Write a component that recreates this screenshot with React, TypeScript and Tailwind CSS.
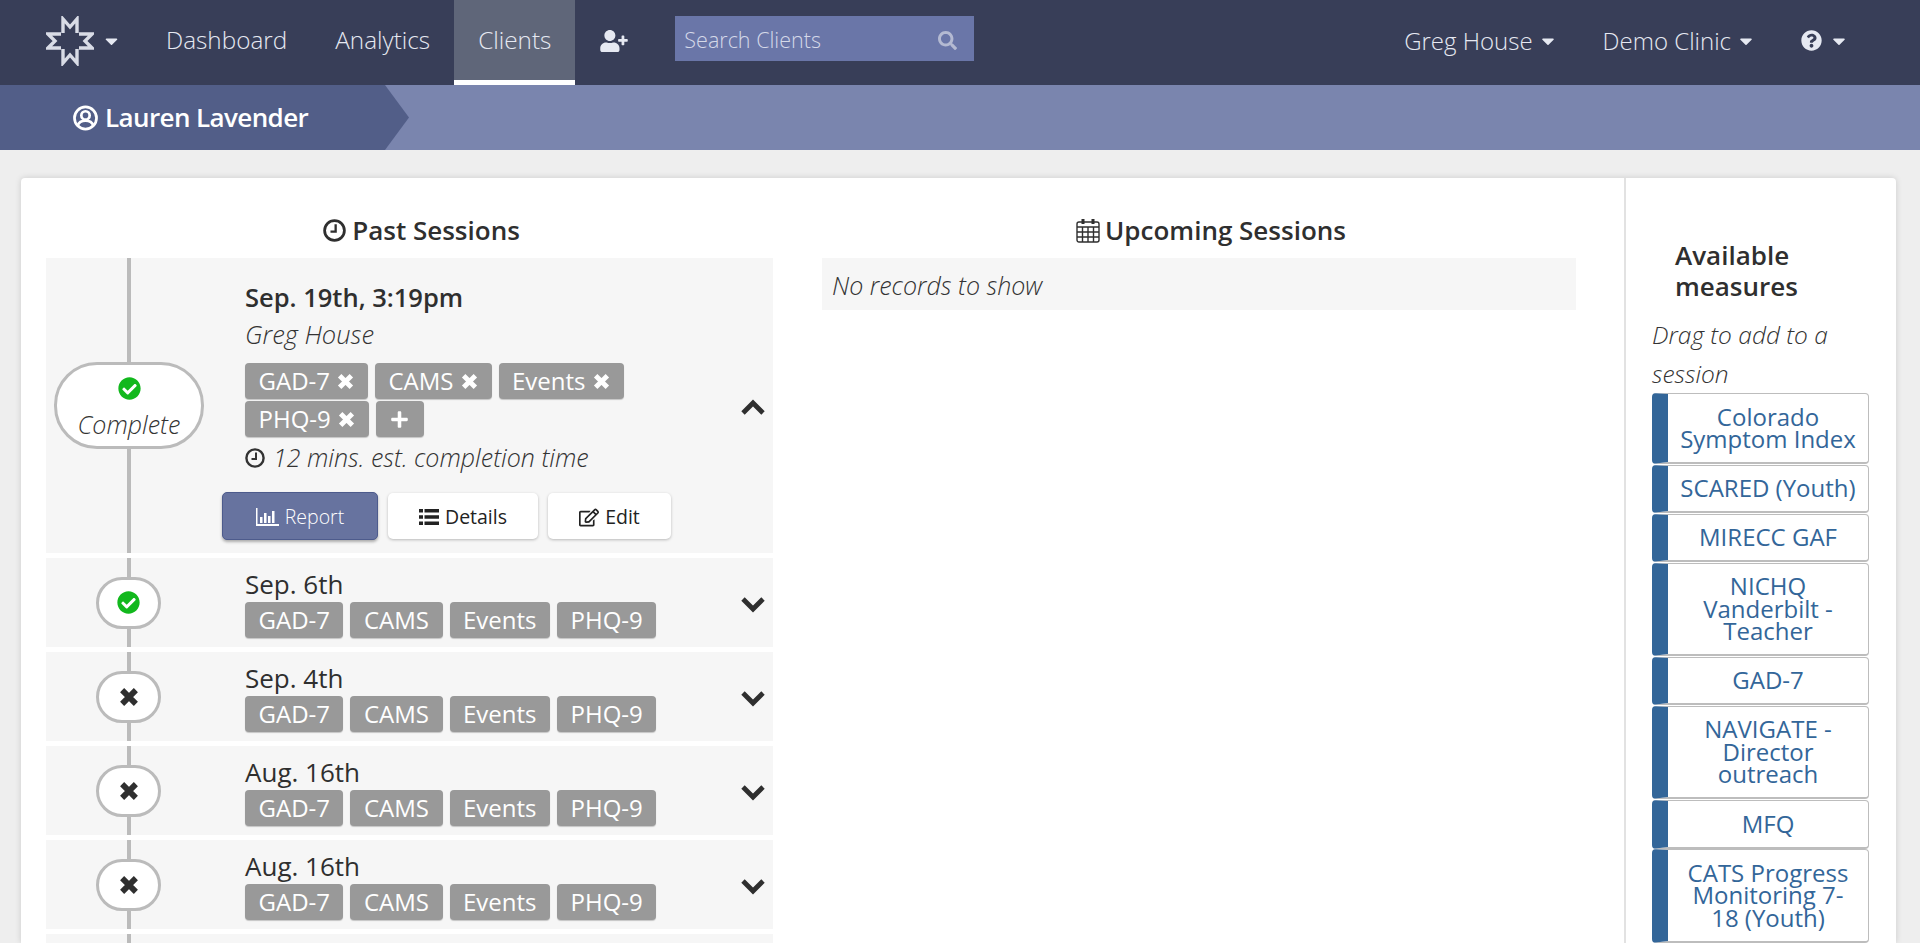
import { FaCaretDown, FaCheckCircle, FaPlus, FaQuestionCircle, FaRegEdit, FaSearch, FaUserPlus } from "react-icons/fa";

const measures = ["GAD-7", "CAMS", "Events", "PHQ-9"];

const sidebarItems = [
  "Colorado Symptom Index",
  "SCARED (Youth)",
  "MIRECC GAF",
  "NICHQ Vanderbilt - Teacher",
  "GAD-7",
  "NAVIGATE - Director outreach",
  "MFQ",
  "CATS Progress Monitoring 7-18 (Youth)",
];

const pastRows = [
  { date: "Sep. 6th", done: true },
  { date: "Sep. 4th", done: false },
  { date: "Aug. 16th", done: false },
  { date: "Aug. 16th", done: false },
];

function Logo() {
  return (
    <svg width="48" height="50" viewBox="0 0 48 50" fill="none" stroke="#d9dce6" strokeWidth="3.400" strokeLinejoin="miter">
      <path d="M17 17V3l7 8 7-8v14" />
      <path d="M17 33v14l7-8 7 8V33" />
      <path d="M15 18H2l7 7-7 7h13" />
      <path d="M33 18h13l-7 7 7 7H33" />
    </svg>
  );
}

function UserRing() {
  return (
    <svg width="25" height="26" viewBox="0 0 24 25" fill="none" stroke="currentColor" strokeWidth="2.600">
      <circle cx="12" cy="12.500" r="10.600" />
      <circle cx="12" cy="10" r="4" />
      <path d="M4.500 20c1-3.500 3.500-5 7.500-5s6.500 1.500 7.500 5" />
    </svg>
  );
}

function ClockIcon({ size }: { size: number }) {
  return (
    <svg width={size} height={size} viewBox="0 0 20 20" fill="none" stroke="currentColor" strokeWidth="2.400">
      <circle cx="10" cy="10" r="8.600" />
      <path d="M11 4.500V11H6.500" strokeWidth="2" />
    </svg>
  );
}

function CalendarIcon() {
  return (
    <svg width="24" height="25" viewBox="0 0 24 25" fill="none" stroke="#2f2f2f" strokeWidth="1.400">
      <rect x="1" y="4" width="22" height="20" rx="2" />
      <path d="M1 9h22M1 14h22M1 19h22M6.500 9v15M12 9v15M17.500 9v15" />
      <path d="M7 1v5M17 1v5" strokeWidth="3" />
    </svg>
  );
}

function ReportIcon() {
  return (
    <svg width="23" height="18" viewBox="0 0 23 18" fill="currentColor">
      <path d="M0 0h1.500v16H23v2H0z" />
      <path d="M4 9h2.500v6H4zM8 5h2.500v10H8zM12 8h2.500v7H12zM16 3h2.500v12H16z" />
    </svg>
  );
}

function ListIcon() {
  return (
    <svg width="20" height="18" viewBox="0 0 20 18" fill="currentColor">
      <path d="M0 1h4v3.500H0zM5.500 1H20v3.500H5.500zM0 7.200h4v3.500H0zM5.500 7.200H20v3.500H5.500zM0 13.500h4V17H0zM5.500 13.500H20V17H5.500z" />
    </svg>
  );
}

function Cross({ size }: { size: number }) {
  return (
    <svg width={size} height={size} viewBox="0 0 16 16" fill="none" stroke="currentColor" strokeWidth="4.600">
      <path d="M2.500 2.500l11 11M13.500 2.500l-11 11" />
    </svg>
  );
}

function Chevron({ up }: { up?: boolean }) {
  return (
    <svg width="24" height="16" viewBox="0 0 24 16" fill="none" stroke="#2f2f2f" strokeWidth="4.800">
      <path d={up ? "M2 14L12 4l10 10" : "M2 2l10 10L22 2"} />
    </svg>
  );
}

function Tag({ children }: { children: React.ReactNode }) {
  return (
    <span className="flex h-[36px] items-center gap-[6px] rounded-[4px] bg-[#999999] px-[13.500px] text-[24px] text-white shadow-[0_1px_1px_rgba(0,0,0,0.2)]">
      {children}
    </span>
  );
}

function NavLink({ label, active }: { label: string; active?: boolean }) {
  return (
    <a className={`flex h-[85px] items-center px-6 text-[24.300px] font-light ${active ? "border-b-[5px] border-white bg-[#5f6679]" : "pb-[4px]"}`}>
      {label}
    </a>
  );
}

function NavDropdown({ label }: { label: string }) {
  return (
    <span className="flex items-center gap-[8px] text-[24px] font-light">
      {label}
      <FaCaretDown className="h-[20px] w-[14px]" />
    </span>
  );
}

function Timeline({ children }: { children: React.ReactNode }) {
  return (
    <div className="flex w-[165px] shrink-0 flex-col items-center">
      <div className="w-[4px] flex-1 bg-[#bbbbbb]" />
      {children}
      <div className="w-[4px] flex-1 bg-[#bbbbbb]" />
    </div>
  );
}

function SessionRow({ date, done }: { date: string; done: boolean }) {
  return (
    <div className="flex h-[89px] bg-[#f6f6f6]">
      <Timeline>
        <div className="flex h-[52px] w-[65px] items-center justify-center rounded-[26px] border-[3px] border-[#bbbbbb] bg-white text-[#2f2f2f]">
          {done ? <FaCheckCircle className="h-[23px] w-[23px] text-[#12b81d]" /> : <Cross size={20} />}
        </div>
      </Timeline>
      <div className="flex-1 pl-[34px] pt-[11px]">
        <div className="h-[33px] text-[26px] leading-[30px] text-[#2f2f2f]">{date}</div>
        <div className="flex gap-[7px]">
          {measures.map((m) => (
            <Tag key={m}>{m}</Tag>
          ))}
        </div>
      </div>
      <div className="flex w-[32px] items-center pt-[5px]">
        <Chevron />
      </div>
    </div>
  );
}

export default function App() {
  return (
    <div className="flex h-screen flex-col overflow-hidden bg-[#eeeeee] font-['Open_Sans',sans-serif]">
      {/* top nav */}
      <nav className="flex h-[85px] shrink-0 items-center bg-[#383e58] text-[#e6e9f2]">
        <div className="mb-[3px] ml-[46px] flex w-[96px] items-center gap-[11px]">
          <Logo />
          <FaCaretDown className="h-[20px] w-[13px]" />
        </div>
        <NavLink label="Dashboard" />
        <NavLink label="Analytics" />
        <NavLink label="Clients" active />
        <div className="mb-[4px] flex w-[76px] justify-center">
          <FaUserPlus className="ml-[2px] h-[22px] w-[28px]" />
        </div>
        <div className="mb-[8px] ml-6 flex h-[45px] w-[299px] items-center justify-between bg-[#6a76a8] pl-[9px] pr-[17px] pt-[3px] text-[21.500px] font-light text-[#d5d9e8]">
          Search Clients
          <FaSearch className="h-[19px] w-[19px] text-[#b4bad2]" />
        </div>
        <div className="mb-[4px] ml-auto mr-[74px] flex items-center gap-[48px]">
          <NavDropdown label="Greg House" />
          <NavDropdown label="Demo Clinic" />
          <span className="flex items-center gap-[10px]">
            <FaQuestionCircle className="h-[21px] w-[21px]" />
            <FaCaretDown className="h-[20px] w-[14px]" />
          </span>
        </div>
      </nav>

      {/* client bar */}
      <div className="h-[65px] shrink-0 bg-[#7a85ae]">
        <div className="flex h-full w-[409px] items-center gap-[7px] bg-[#525e88] pl-[73px] text-[26px] font-semibold tracking-[-0.6px] text-white [clip-path:polygon(0_0,385px_0,409px_50%,385px_100%,0_100%)]">
          <UserRing />
          Lauren Lavender
        </div>
      </div>

      {/* main card */}
      <div className="ml-[21px] mr-[24px] mt-[28px] flex min-h-0 flex-1 rounded-t-[4px] bg-white shadow-[0_0_6px_rgba(0,0,0,0.15)]">
        <div className="flex flex-1 gap-[49px] pl-[25px] pr-[48px]">
          {/* past sessions */}
          <section className="w-[727px]">
            <h2 className="flex h-[80px] items-center justify-center gap-[6px] pl-[24px] pt-[24px] text-[26px] font-semibold text-[#2f2f2f]">
              <ClockIcon size={23} />
              Past Sessions
            </h2>
            <div className="flex flex-col gap-[5px]">
              <div className="flex h-[295px] bg-[#f6f6f6]">
                <div className="flex w-[176px] shrink-0 justify-start pl-[8px]">
                  <div className="flex w-[150px] flex-col items-center">
                    <div className="w-[4px] flex-1 bg-[#bbbbbb]" />
                    <div className="flex h-[87px] w-[150px] flex-col items-center justify-center rounded-[43px] border-[3px] border-[#bbbbbb] bg-white pt-[5px]">
                      <FaCheckCircle className="h-[23px] w-[23px] text-[#12b81d]" />
                      <span className="mt-[8px] text-[25px] font-light italic leading-[32px] text-[#333333]">Complete</span>
                    </div>
                    <div className="w-[4px] flex-1 bg-[#bbbbbb]" />
                  </div>
                </div>
                <div className="flex-1 pt-[22px]">
                  <div className="pl-[23px]">
                    <div className="text-[25.500px] font-semibold leading-[34px] text-[#2f2f2f]">Sep. 19th, 3:19pm</div>
                    <div className="mt-[4px] text-[25.500px] font-light italic leading-[33px] text-[#333333]">Greg House</div>
                    <div className="mt-[12px] flex w-[400px] flex-wrap gap-[2px_7px]">
                      {measures.map((m) => (
                        <Tag key={m}>
                          {m}
                          <span className="ml-[1px] mr-[0.5px]">
                            <Cross size={17} />
                          </span>
                        </Tag>
                      ))}
                      <Tag>
                        <FaPlus className="mx-[1px] h-[19px] w-[19px]" />
                      </Tag>
                    </div>
                    <div className="mt-[3px] flex h-[36px] items-center gap-[8px] text-[25px] font-light italic text-[#333333]">
                      <ClockIcon size={20} />
                      12 mins. est. completion time
                    </div>
                  </div>
                  <div className="mt-[16px] flex items-center gap-[10px]">
                    <button className="flex h-[48px] w-[156px] items-center justify-center gap-[6px] rounded-[5px] border border-[#4d5b8c] bg-[#67739f] pt-[2px] text-[19.500px] font-light text-white shadow-[0_2px_3px_rgba(0,0,0,0.3)]">
                      <ReportIcon />
                      Report
                    </button>
                    <button className="flex h-[46px] w-[150px] items-center justify-center gap-[6px] rounded-[5px] bg-white pt-[2px] text-[19.500px] text-[#222222] shadow-[0_1px_3px_rgba(0,0,0,0.25)]">
                      <ListIcon />
                      Details
                    </button>
                    <button className="flex h-[46px] w-[123px] items-center justify-center gap-[6px] rounded-[5px] bg-white pt-[2px] text-[19.500px] text-[#222222] shadow-[0_1px_3px_rgba(0,0,0,0.25)]">
                      <FaRegEdit className="h-[19px] w-[20px]" />
                      Edit
                    </button>
                  </div>
                </div>
                <div className="flex w-[32px] items-center pt-[3px]">
                  <Chevron up />
                </div>
              </div>
              {pastRows.map((row, i) => (
                <SessionRow key={i} date={row.date} done={row.done} />
              ))}
              <div className="flex h-[40px] bg-[#f6f6f6]">
                <Timeline>
                  <span />
                </Timeline>
              </div>
            </div>
          </section>

          {/* upcoming sessions */}
          <section className="flex-1">
            <h2 className="flex h-[80px] items-center justify-center gap-[5px] pl-[24px] pt-[24px] text-[26px] font-semibold text-[#2f2f2f]">
              <CalendarIcon />
              Upcoming Sessions
            </h2>
            <div className="flex h-[52px] items-center bg-[#f6f6f6] pl-[10px] pt-[4px] text-[25px] font-light italic text-[#333333]">
              No records to show
            </div>
          </section>
        </div>

        {/* available measures */}
        <aside className="w-[272px] shrink-0 border-l-2 border-[#e2e2e2] pl-[26px] pr-[27px]">
          <h3 className="ml-[23px] mt-[62px] text-[26px] font-semibold leading-[31px] text-[#2f2f2f]">
            Available measures
          </h3>
          <p className="mt-[13px] text-[24.500px] font-light italic leading-[39px] text-[#333333]">
            Drag to add to a session
          </p>
          <div className="flex flex-col gap-[0.6px]">
            {sidebarItems.map((item) => (
              <div
                key={item}
                className="rounded-[4px] border border-b-2 border-[#bdbdbd] border-l-[16px] border-l-[#336699] px-[11.500px] py-[11.500px] text-center text-[24px] font-medium leading-[22.500px] text-[#336699]"
              >
                {item}
              </div>
            ))}
          </div>
        </aside>
      </div>
    </div>
  );
}
